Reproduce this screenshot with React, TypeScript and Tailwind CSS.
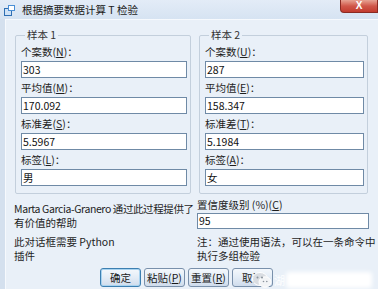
import React from "react";

const font = { fontFamily: '"Noto Sans CJK SC", "Liberation Sans", sans-serif' };

function U({ c }: { c: string }) {
  return <span className="underline underline-offset-1">{c}</span>;
}

function Field({ label, k, value }: { label: string; k: string; value: string }) {
  return (
    <div className="pt-[3px]">
      <div className="h-[14px] leading-[14px] text-[10.5px] text-[#1e1e1e]">
        {label}(<U c={k} />)：
      </div>
      <div className="mt-[2px] h-[17px] bg-white border border-[#6f8aa6] px-[1px] text-[10.5px] leading-[15px] text-[#111]">
        {value}
      </div>
    </div>
  );
}

function Group({ title, width, inputW, fields }: { title: string; width: string; inputW: string; fields: [string, string, string][] }) {
  return (
    <fieldset className={`${width} border border-[#c3cfdc] rounded-[2px] pl-[5px] pb-[7px]`}>
      <legend className="ml-[4px] px-[2px] h-[14px] leading-[14px] text-[10.5px] text-[#333]">{title}</legend>
      <div className={inputW}>
        {fields.map(([l, k, v]) => (
          <Field key={l} label={l} k={k} value={v} />
        ))}
      </div>
    </fieldset>
  );
}

function Btn({ children, def }: { children: React.ReactNode; def?: boolean }) {
  return (
    <div
      className={`w-[41px] h-[19px] flex items-center justify-center rounded-[3px] border text-[10.5px] leading-[14px] text-[#1a1a1a] bg-gradient-to-b from-[#f4f8fc] via-[#e3ecf6] to-[#cfdcec] ${
        def ? "border-[#3c7fb1] shadow-[inset_0_0_0_1px_#a8d3f0]" : "border-[#7990ab]"
      }`}
    >
      {children}
    </div>
  );
}

export default function App() {
  return (
    <div className="w-[378px] h-[289px] overflow-hidden bg-[#d4e0ee] flex flex-col relative whitespace-nowrap" style={font}>
      {/* title bar */}
      <div className="h-[19px] shrink-0 flex items-start bg-gradient-to-b from-[#e3ecf7] to-[#d6e3f2]">
        <svg width="11" height="11" viewBox="0 0 11 11" className="ml-[4px] mt-[5px]">
          <rect x="0" y="3" width="8" height="8" fill="#2f6fb3" />
          <rect x="1" y="4" width="6" height="6" fill="#cfe2f6" />
          <rect x="4" y="0" width="7" height="6" fill="#4a8fd6" />
          <rect x="5" y="1" width="5" height="4" fill="#ffffff" />
        </svg>
        <div className="ml-[7px] mt-[3px] text-[10.5px] leading-[14px] text-[#1b1b1b]">根据摘要数据计算 T 检验</div>
        <div className="ml-auto w-[38px] h-[13px] rounded-bl-[4px] border border-t-0 border-[#8a2a22] bg-gradient-to-b from-[#e6a293] via-[#d0574a] to-[#c23b2e] flex items-center justify-center">
          <span className="text-white text-[10px] font-bold leading-none" style={{ fontFamily: '"Liberation Sans", sans-serif' }}>X</span>
        </div>
      </div>

      {/* client */}
      <div className="flex-1 ml-[5px] bg-[#e9f0f8] border-l border-t border-[#f6f9fd] pl-[9px] pt-[8px]">
        <div className="flex gap-[8px]">
          <Group
            title="样本 1"
            width="w-[176px]"
            inputW="w-[166px]"
            fields={[
              ["个案数", "N", "303"],
              ["平均值", "M", "170.092"],
              ["标准差", "S", "5.5967"],
              ["标签", "L", "男"],
            ]}
          />
          <Group
            title="样本 2"
            width="w-[169px]"
            inputW="w-[159px]"
            fields={[
              ["个案数", "U", "287"],
              ["平均值", "E", "158.347"],
              ["标准差", "T", "5.1984"],
              ["标签", "A", "女"],
            ]}
          />
        </div>

        <div className="flex text-[10.5px] leading-[14px] text-[#1e1e1e]">
          <div className="w-[183px] -ml-[1px] pt-[8px]">
            <div className="tracking-[-0.4px]">Marta Garcia-Granero 通过此过程提供了</div>
            <div>有价值的帮助</div>
            <div className="mt-[5px]">此对话框需要 Python</div>
            <div>插件</div>
          </div>
          <div className="pt-[4px]">
            <div>
              置信度级别 (%)(<U c="C" />)
            </div>
            <div className="mt-[1px] w-[172px] h-[16px] bg-white border border-[#6f8aa6] px-[1px] leading-[14px] text-[#111]">95</div>
            <div className="mt-[6px]">注：通过使用语法，可以在一条命令中</div>
            <div>执行多组检验</div>
          </div>
        </div>

        <div className="flex gap-[3px] mt-[5px] ml-[85px]">
          <Btn def>确定</Btn>
          <Btn>
            粘贴(<U c="P" />)
          </Btn>
          <Btn>
            重置(<U c="R" />)
          </Btn>
          <Btn>取消</Btn>
        </div>
      </div>

      {/* watermark */}
      <div className="absolute left-[252px] top-[271px] flex items-center">
        <svg width="20" height="18" viewBox="0 0 20 18">
          <ellipse cx="8" cy="8" rx="7.5" ry="6.5" fill="#d9dde2" stroke="#ffffff" strokeWidth="1" />
          <ellipse cx="13" cy="11" rx="6" ry="5.2" fill="#f2f4f6" stroke="#ffffff" strokeWidth="1" />
          <circle cx="5.5" cy="6.5" r="1" fill="#8a939d" />
          <circle cx="10" cy="6.5" r="1" fill="#8a939d" />
          <circle cx="11.5" cy="10.5" r="0.8" fill="#8a939d" />
          <circle cx="14.8" cy="10.5" r="0.8" fill="#8a939d" />
        </svg>
        <span className="ml-[2px] text-[11px] text-white/90 leading-none">湖</span>
      </div>
      <div className="absolute left-[286px] top-[272px] w-[86px] h-[16px] bg-white rounded-[3px] blur-[2px]" />
    </div>
  );
}
